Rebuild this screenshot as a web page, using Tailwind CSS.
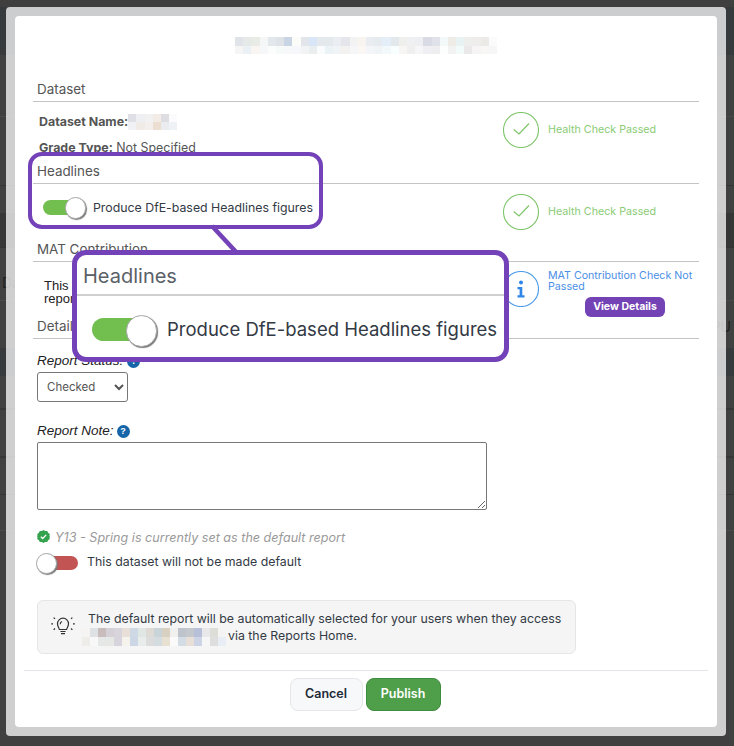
<!doctype html>
<html>
<head>
<meta charset="utf-8">
<script src="https://cdn.jsdelivr.net/npm/@tailwindcss/browser@4"></script>
</head>
<body class="bg-[#404040]">
<div class="relative w-[734px] h-[746px] overflow-hidden bg-[#404040] font-['Inter',sans-serif]">
  <!-- page dimmed behind the dialog -->
  <div class="absolute inset-0 flex flex-col">
    <div class="h-[7px] bg-[#3f3f3f]"></div>
    <div class="h-[48px] bg-[#373a3d]"></div>
    <div class="h-[62px] border-b border-[#4a4a4a]"></div>
    <div class="h-[69px] border-b border-[#333333]"></div>
    <div class="h-[27px]"></div>
    <div class="h-[35px] bg-[#363636] border-b border-[#333333]"></div>
    <div class="h-[53px] border-b border-[#4a4a4a] relative"><span class="absolute left-[2px] top-[25px] text-[14px] text-[#222222] leading-[20px]">Da</span></div>
    <div class="h-[47px] relative"><span class="absolute right-[3px] top-[16px] text-[14px] text-[#222222] leading-[20px]">PU</span></div>
    <div class="h-[28px] bg-[#373a3d]"></div>
    <div class="h-[34px] border-b-2 border-[#363636]"></div>
    <div class="h-[48px] border-b-2 border-[#363636]"></div>
    <div class="h-[37px] border-b border-[#333333]"></div>
    <div class="h-[36px] border-b border-[#4a4a4a]"></div>
  </div>

  <!-- dialog -->
  <div class="absolute left-[6px] top-[7px] w-[720px] h-[729px] p-[9px] bg-white/75 rounded-[4px]">
    <div class="w-[702px] h-[711px] bg-white rounded-[4px] flex flex-col">
      <div class="px-[18px] flex-1 flex flex-col">
        <!-- title (pixelated) -->
        <div class="pt-[21px] flex justify-center">
          <div class="w-[262px] h-[17px] grid grid-cols-32 grid-rows-2">
            <i class="bg-[#e0e3e8]"></i><i class="bg-[#e5e9e8]"></i><i class="bg-[#e8ebe6]"></i><i class="bg-[#f5f6f6]"></i><i class="bg-[#e2e7ec]"></i><i class="bg-[#dfe3e8]"></i><i class="bg-[#c9d5e4]"></i><i class="bg-[#fbfbf8]"></i><i class="bg-[#e2e6ea]"></i><i class="bg-[#d9e6f7]"></i><i class="bg-[#e4e9ee]"></i><i class="bg-[#e4e9ec]"></i><i class="bg-[#eaeef2]"></i><i class="bg-[#e4e6ec]"></i><i class="bg-[#f3f3f3]"></i><i class="bg-[#f8f5f0]"></i><i class="bg-[#e9ecf0]"></i><i class="bg-[#e6ebf0]"></i><i class="bg-[#e4eef8]"></i><i class="bg-[#e3e8ec]"></i><i class="bg-[#efefec]"></i><i class="bg-[#eef0f2]"></i><i class="bg-[#eeeff2]"></i><i class="bg-[#d9dbe4]"></i><i class="bg-[#dfe2e8]"></i><i class="bg-[#f3f9f9]"></i><i class="bg-[#efece8]"></i><i class="bg-[#e9f2f2]"></i><i class="bg-[#eeeeec]"></i><i class="bg-[#eeedeb]"></i><i class="bg-[#ebeae7]"></i><i class="bg-[#fbfbfb]"></i>
            <i class="bg-[#f5f5f6]"></i><i class="bg-[#ebf0f4]"></i><i class="bg-[#f8f5f2]"></i><i class="bg-[#f5f7f8]"></i><i class="bg-[#fbfcfc]"></i><i class="bg-[#f6faf9]"></i><i class="bg-[#f6f8fa]"></i><i class="bg-[#f5f7fa]"></i><i class="bg-[#f2f3f4]"></i><i class="bg-[#eaeeee]"></i><i class="bg-[#f9fbfc]"></i><i class="bg-[#ecf3f7]"></i><i class="bg-[#f1f4f6]"></i><i class="bg-[#f3f2f1]"></i><i class="bg-[#f4f6f8]"></i><i class="bg-[#faf7f4]"></i><i class="bg-[#f3f5f8]"></i><i class="bg-[#f0f4f7]"></i><i class="bg-[#f3f8fb]"></i><i class="bg-[#f8fdfd]"></i><i class="bg-[#f8f6f4]"></i><i class="bg-[#efefef]"></i><i class="bg-[#f6f6f8]"></i><i class="bg-[#eeeef3]"></i><i class="bg-[#eeeef1]"></i><i class="bg-[#fcfdfd]"></i><i class="bg-[#f2f2f3]"></i><i class="bg-[#f2fbfa]"></i><i class="bg-[#ebe8ea]"></i><i class="bg-[#f6f4f5]"></i><i class="bg-[#f8f7f5]"></i><i class="bg-[#f6f6f6]"></i>
          </div>
        </div>

        <!-- Dataset -->
        <div class="mt-[23px] h-[25px] border-b border-[#c4c4c4] pl-[4px] text-[13.4px] leading-[24px] text-[#555555]">Dataset</div>
        <div class="h-[57px] flex justify-between">
          <div class="pl-[6px] pt-[10px] text-[12.4px] leading-[20px] text-[#555555] flex flex-col gap-[6px]">
            <div class="flex items-center"><b class="font-bold">Dataset Name:</b>
              <div class="w-[49px] h-[16px] grid grid-cols-6 grid-rows-2">
                <i class="bg-[#dfe0e6]"></i><i class="bg-[#eeeff2]"></i><i class="bg-[#f1f1f2]"></i><i class="bg-[#f3ece6]"></i><i class="bg-[#dedee2]"></i><i class="bg-[#fbfbfd]"></i>
                <i class="bg-[#f0f1f5]"></i><i class="bg-[#f0ebe7]"></i><i class="bg-[#f3efec]"></i><i class="bg-[#ecdfd2]"></i><i class="bg-[#ebecef]"></i><i class="bg-[#eef2f6]"></i>
              </div>
            </div>
            <div><b class="font-bold">Grade Type:</b> Not Specified</div>
          </div>
          <div class="w-[196px] pt-[10px] flex items-start">
            <svg class="shrink-0" width="36" height="36" viewBox="0 0 36 36" fill="none" stroke="#7fc56a"><circle cx="18" cy="18" r="17.5" stroke-width="1.1"/><path d="M10.7 17.5 16 22 26 11.5" stroke-width="1.2"/></svg>
            <span class="ml-[9px] mt-[11px] text-[10.7px] leading-[14px] text-[#8acb74]">Health Check Passed</span>
          </div>
        </div>

        <!-- Headlines -->
        <div class="h-[25px] border-b border-[#c4c4c4] pl-[4px] text-[13.4px] leading-[24px] text-[#555555]">Headlines</div>
        <div class="h-[53px] flex justify-between">
          <div class="pl-[10px] pt-[13px] flex items-start">
            <div class="relative w-[43px] h-[22px] shrink-0">
              <div class="absolute left-0 top-[3px] w-[39px] h-[15px] rounded-full bg-[#72bf4f]"></div>
              <div class="absolute right-0 top-0 w-[21px] h-[22px] rounded-full bg-white border border-[#a8a8a8] shadow-[1px_1px_1px_#777777]"></div>
            </div>
            <span class="ml-[7px] mt-[1px] text-[12.33px] leading-[20px] text-[#333a44]">Produce DfE-based Headlines figures</span>
          </div>
          <div class="w-[196px] pt-[10px] flex items-start">
            <svg class="shrink-0" width="36" height="36" viewBox="0 0 36 36" fill="none" stroke="#7fc56a"><circle cx="18" cy="18" r="17.5" stroke-width="1.1"/><path d="M10.7 17.5 16 22 26 11.5" stroke-width="1.2"/></svg>
            <span class="ml-[9px] mt-[11px] text-[10.7px] leading-[14px] text-[#8acb74]">Health Check Passed</span>
          </div>
        </div>

        <!-- MAT -->
        <div class="h-[25px] border-b border-[#c4c4c4] pl-[4px] text-[13.4px] leading-[24px] text-[#555555]">MAT Contribution</div>
        <div class="h-[52px] flex justify-between">
          <div class="pl-[11px] pt-[17px] font-['Liberation_Sans',sans-serif] text-[13px] leading-[13px] text-[#222222]">This<br>report</div>
          <div class="w-[196px] pt-[9px] flex items-start">
            <svg class="shrink-0" width="36" height="36" viewBox="0 0 36 36" fill="none"><circle cx="18" cy="18" r="17.5" stroke="#4a9ae8" stroke-width="1.1"/><circle cx="18" cy="11.5" r="2" fill="#2d86e8"/><path d="M14.5 16H19.3V24.3H21.5V26.5H14.5V24.3H16.6V18.2H14.5Z" fill="#2d86e8"/></svg>
            <div class="ml-[9px] -mt-[1px] w-[154px] shrink-0 flex flex-col items-center">
              <span class="w-full text-[10.65px] leading-[11px] text-[#4b8fe6]">MAT Contribution Check Not Passed</span>
              <button class="mt-[5px] w-[80px] h-[20px] rounded-[6px] bg-[#7342b5] text-white text-[10.5px] font-bold leading-[18px]">View Details</button>
            </div>
          </div>
        </div>

        <!-- Details -->
        <div class="h-[25px] border-b border-[#c4c4c4] pl-[4px] text-[13.4px] leading-[24px] text-[#555555]">Details</div>
        <div class="pl-[4px] flex flex-col items-start">
          <div class="mt-[12px] flex items-center gap-[4px] h-[20px] font-['Liberation_Sans',sans-serif] italic text-[13.5px] text-[#222222]">Report Status:
            <span class="w-[13px] h-[13px] rounded-full bg-[#1565a8] text-white not-italic font-bold text-[9px] leading-[13px] text-center">?</span>
          </div>
          <select class="mt-[1px] w-[91px] h-[30px] pl-[5px] border border-[#777777] rounded-[3px] bg-white text-[11.5px] leading-[14px] pb-[1px] text-[#555555]"><option>Checked</option></select>
          <div class="mt-[19px] flex items-center gap-[3px] h-[20px] font-['Liberation_Sans',sans-serif] italic text-[13.5px] text-[#222222]">Report Note:
            <span class="w-[13px] h-[13px] rounded-full bg-[#1565a8] text-white not-italic font-bold text-[9px] leading-[13px] text-center">?</span>
          </div>
          <textarea class="mt-[1px] w-[450px] h-[68px] border border-[#777777] rounded-[2px] bg-white"></textarea>
          <div class="mt-[17px] h-[20px] flex items-center">
            <svg class="-mt-[1px]" width="13" height="13" viewBox="0 0 13 13"><path d="M6.5 0 8.2 1.1 10.2 1 11.1 2.8 12.8 3.9 12.4 5.9 13 6.5 12.4 8 12.8 9.1 11.1 10.2 10.2 12 8.2 11.9 6.5 13 4.8 11.9 2.8 12 1.9 10.2.2 9.1.6 7.1 0 6.5.6 5 .2 3.9 1.9 2.8 2.8 1 4.8 1.1Z" fill="#34a24f"/><path d="M3.8 6.7 5.7 8.5 9.2 4.9" fill="none" stroke="#fff" stroke-width="1.3"/></svg>
            <span class="ml-[5px] italic text-[12.6px] leading-[20px] translate-y-[1px] text-[#9a9a9a]">Y13 - Spring is currently set as the default report</span>
          </div>
          <div class="mt-[6px] h-[21px] flex items-center -ml-[1px]">
            <div class="relative w-[42px] h-[21px] shrink-0">
              <div class="absolute right-0 top-[3px] w-[34px] h-[14px] rounded-full bg-[#c25454]"></div>
              <div class="absolute left-0 top-0 w-[21px] h-[21px] rounded-full bg-white border border-[#a8a8a8] shadow-[1px_1px_1px_#777777]"></div>
            </div>
            <span class="ml-[9px] -mt-[2px] text-[12.33px] text-[#333a44]">This dataset will not be made default</span>
          </div>
          <div class="mt-[26px] w-[539px] h-[54px] rounded-[6px] bg-[#f5f5f5] border border-[#e6e6e6] flex items-start">
            <svg class="mt-[14px] ml-[13px] shrink-0" width="24" height="22" viewBox="0 0 24 22" fill="none" stroke="#333333" stroke-width="1.2"><path d="M8.4 14.5C8 12.5 6.5 11.6 6.5 8.8 6.5 5.6 9 3.2 12 3.2S17.5 5.6 17.5 8.8C17.5 11.6 16 12.5 15.6 14.5Z"/><path d="M9.4 16.5H14.6M10 18.7H14"/><path d="M11 6.5C9.8 7 9.2 8 9.2 9.2"/><path d="M2 8.8H.2M4 3.8 2.6 2.6M4 13.5 2.6 14.8M22 8.8H23.8M20 3.8 21.4 2.6M20 13.5 21.4 14.8"/></svg>
            <div class="ml-[13px] pt-[9px] text-[12.33px] leading-[18px] text-[#333a44]">
              <div>The default report will be automatically selected for your users when they access</div>
              <div class="flex items-center -ml-[6px]">
                <div class="w-[144px] h-[18px] grid grid-cols-18 grid-rows-2 shrink-0">
                  <i class="bg-[#f5f4f2]"></i><i class="bg-[#dfe2e4]"></i><i class="bg-[#c9bcbc]"></i><i class="bg-[#d5cfd6]"></i><i class="bg-[#d8d4dc]"></i><i class="bg-[#e8dfd8]"></i><i class="bg-[#cfd9e6]"></i><i class="bg-[#e0e6e4]"></i><i class="bg-[#dedbd6]"></i><i class="bg-[#c8d4d8]"></i><i class="bg-[#d8d0c0]"></i><i class="bg-[#f0f0ee]"></i><i class="bg-[#bfc4cc]"></i><i class="bg-[#c4c8cc]"></i><i class="bg-[#b8bfd8]"></i><i class="bg-[#e8e8ea]"></i><i class="bg-[#deded8]"></i><i class="bg-[#f4f4f4]"></i>
                  <i class="bg-[#efedea]"></i><i class="bg-[#f8f8f8]"></i><i class="bg-[#e6e8e8]"></i><i class="bg-[#e6e8e6]"></i><i class="bg-[#d8d4de]"></i><i class="bg-[#f6f2ec]"></i><i class="bg-[#ccd6e4]"></i><i class="bg-[#e8ecea]"></i><i class="bg-[#dcdcdc]"></i><i class="bg-[#d4dce0]"></i><i class="bg-[#e8e0d0]"></i><i class="bg-[#fafafa]"></i><i class="bg-[#d4dce6]"></i><i class="bg-[#e8e0d8]"></i><i class="bg-[#ccd4e6]"></i><i class="bg-[#f6f6f6]"></i><i class="bg-[#dedede]"></i><i class="bg-[#e8eef4]"></i>
                </div>
                <span class="ml-[2px] -translate-y-[1px]">via the Reports Home.</span>
              </div>
            </div>
          </div>
        </div>
      </div>
      <!-- footer -->
      <div class="mx-[9px] h-[57px] border-t border-[#e4e4ec] pt-[7px] pr-[2px] flex justify-center gap-[3px]">
        <button class="w-[73px] h-[33px] rounded-[8px] bg-[#f7f8fa] border border-[#e6e6ea] text-[12.5px] font-semibold text-[#222b38]">Cancel</button>
        <button class="w-[75px] h-[33px] rounded-[8px] bg-[#4f9e4a] border border-[#3d8b3d] text-[12.5px] font-semibold text-white">Publish</button>
      </div>
    </div>
  </div>

  <!-- callout annotations -->
  <div class="absolute left-[28px] top-[152px] w-[295px] h-[77px] rounded-[14px] border-[4.5px] border-[#7442b8]"></div>
  <svg class="absolute left-[205px] top-[222px]" width="40" height="34" viewBox="0 0 40 34" fill="none"><path d="M7 4 32 31" stroke="#7442b8" stroke-width="4.5"/></svg>
  <div class="absolute left-[72px] top-[250px] w-[437px] h-[112px] rounded-[14px] border-[5px] border-[#7442b8] bg-white flex flex-col">
    <div class="h-[41px] shrink-0 border-b-2 border-[#d0d0d0] pl-[6px] text-[20px] leading-[43px] text-[#5a6068]">Headlines</div>
    <div class="pl-[15px] pt-[20px] flex items-start">
      <div class="relative w-[65px] h-[32px] -mt-[1px] shrink-0">
        <div class="absolute left-0 top-[3px] w-[58px] h-[23px] rounded-full bg-[#72bf4f]"></div>
        <div class="absolute right-0 top-0 w-[31px] h-[32px] rounded-full bg-white border border-[#a8a8a8] shadow-[1px_1px_1px_#777777]"></div>
      </div>
      <span class="ml-[10px] -translate-y-[1px] text-[18.5px] leading-[28px] text-[#333a44]">Produce DfE-based Headlines figures</span>
    </div>
  </div>
</div>
</body>
</html>
